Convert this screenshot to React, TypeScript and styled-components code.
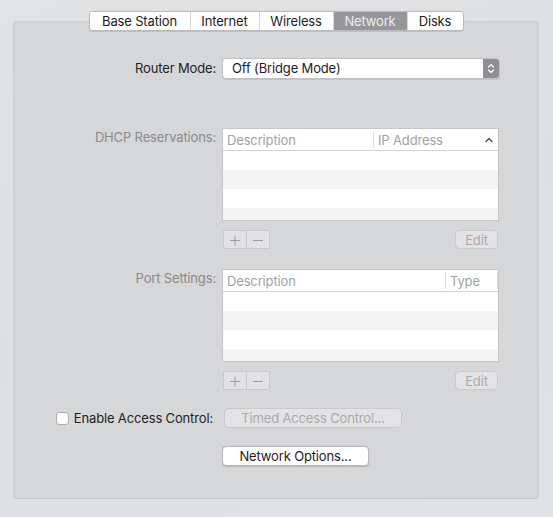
import React from "react";
import styled, { createGlobalStyle } from "styled-components";

const Global = createGlobalStyle`
  html, body { margin: 0; padding: 0; }
  body {
    width: 553px;
    height: 517px;
    overflow: hidden;
    font-family: Inter, Roboto, "Liberation Sans", Arial, sans-serif;
    font-size: 13px;
    letter-spacing: -0.15px;
    color: #222;
    background: linear-gradient(160deg, #e2e3e5 0%, #dedfe1 50%, #e1e2e4 100%);
  }
`;

const Page = styled.div`
  box-sizing: border-box;
  width: 553px;
  height: 517px;
  padding: 11px 14px 0 13px;
  display: flex;
  flex-direction: column;
`;

const TabBar = styled.div`
  align-self: center;
  display: flex;
  height: 20px;
  box-sizing: border-box;
  border: 1px solid #b9b9bb;
  border-radius: 4px;
  background: #fff;
  overflow: hidden;
  position: relative;
  z-index: 1;
  box-shadow: 0 0.5px 1px rgba(0, 0, 0, 0.12);
`;

const Tab = styled.div<{ $active?: boolean; $w: number }>`
  width: ${(p) => p.$w}px;
  box-sizing: border-box;
  display: flex;
  align-items: center;
  justify-content: center;
  font-size: 13px;
  color: ${(p) => (p.$active ? "#ececee" : "#1d1d1d")};
  background: ${(p) => (p.$active ? "#97979b" : "#fff")};
  border-left: 1px solid #d6d6d8;
  &:first-child { border-left: none; }
`;

const Panel = styled.div`
  margin-top: -10px;
  box-sizing: border-box;
  height: 478px;
  border: 1px solid #cbccce;
  border-bottom-color: #c4c5c7;
  border-radius: 4px;
  background: #d6d7d9;
  padding-top: 36px;
  display: flex;
  flex-direction: column;
`;

const Row = styled.div<{ $mt?: number }>`
  display: flex;
  align-items: flex-start;
  margin-top: ${(p) => p.$mt ?? 0}px;
`;

const Label = styled.div<{ $disabled?: boolean; $h?: number }>`
  width: 202px;
  margin-right: 6px;
  text-align: right;
  line-height: ${(p) => p.$h ?? 21}px;
  color: ${(p) => (p.$disabled ? "#8a8a8c" : "#1f1f1f")};
  white-space: nowrap;
`;

const Control = styled.div`
  width: 277px;
`;

const Select = styled.div`
  box-sizing: border-box;
  width: 278px;
  height: 21px;
  border: 1px solid #c2c2c4;
  border-radius: 4px;
  background: #fff;
  display: flex;
  align-items: stretch;
  overflow: hidden;
  box-shadow: 0 0.5px 1px rgba(0, 0, 0, 0.1);
`;

const SelectText = styled.div`
  flex: 1;
  padding-left: 9px;
  line-height: 19px;
  color: #1d1d1d;
`;

const Stepper = styled.div`
  width: 16px;
  background: #8f8f93;
  display: flex;
  align-items: center;
  justify-content: center;
`;

const Table = styled.div`
  box-sizing: border-box;
  width: 277px;
  height: 93px;
  border: 1px solid #c6c6c8;
  background: #fff;
  display: flex;
  flex-direction: column;
  overflow: hidden;
`;

const Header = styled.div`
  height: 21px;
  border-bottom: 1px solid #d3d3d5;
  display: flex;
  align-items: stretch;
  color: #a2a2a4;
  flex-shrink: 0;
`;

const HeaderCell = styled.div<{ $w?: number; $sep?: boolean }>`
  ${(p) => (p.$w ? `width: ${p.$w}px;` : "flex: 1;")}
  box-sizing: border-box;
  padding-left: 4px;
  padding-top: 1px;
  display: flex;
  justify-content: space-between;
  align-items: center;
  ${(p) => (p.$sep ? "border-left: 1px solid #dcdcde; margin: 2px 0 2px 0;" : "")}
`;

const Caret = styled.span`
  padding-right: 5px;
  display: flex;
  align-items: center;
`;

const EndSep = styled.span`
  align-self: stretch;
  border-right: 1px solid #dcdcde;
  margin-top: -1px;
`;

const RowStripe = styled.div<{ $odd?: boolean }>`
  height: 19px;
  flex-shrink: 0;
  background: ${(p) => (p.$odd ? "#f4f4f5" : "#fff")};
`;

const ButtonsRow = styled.div`
  display: flex;
  justify-content: space-between;
  align-items: center;
  width: 277px;
  padding-left: 1px;
  box-sizing: border-box;
`;

const Segmented = styled.div`
  display: flex;
  height: 19px;
  border: 1px solid #c9c9cb;
  box-sizing: border-box;
  background: #e2e2e4;
`;

const SegButton = styled.div`
  width: 22px;
  display: flex;
  align-items: center;
  justify-content: center;
  & + & { border-left: 1px solid #c9c9cb; }
`;

const Button = styled.div<{ $disabled?: boolean; $w: number }>`
  box-sizing: border-box;
  width: ${(p) => p.$w}px;
  height: 20px;
  border: 1px solid ${(p) => (p.$disabled ? "#cacacc" : "#b7b7b9")};
  border-radius: 4px;
  background: ${(p) => (p.$disabled ? "#e3e3e5" : "#fff")};
  color: ${(p) => (p.$disabled ? "#a9a9ab" : "#1d1d1d")};
  display: flex;
  align-items: center;
  justify-content: center;
  box-shadow: ${(p) => (p.$disabled ? "none" : "0 0.5px 1px rgba(0,0,0,0.15)")};
`;

const SmallButton = styled(Button)`
  height: 19px;
  margin-right: 1px;
`;

const CheckRow = styled.div`
  display: flex;
  align-items: center;
  margin-top: 18px;
`;

const CheckLabel = styled.label`
  width: 202px;
  margin-right: 8px;
  display: flex;
  justify-content: flex-end;
  align-items: center;
  gap: 5px;
  color: #1f1f1f;
  white-space: nowrap;
  padding-right: 3px;
  box-sizing: border-box;
`;

const Box = styled.span`
  width: 13px;
  height: 13px;
  box-sizing: border-box;
  border: 1px solid #ababad;
  border-radius: 3px;
  background: #fff;
  display: inline-block;
`;

const Glyph = ({ minus }: { minus?: boolean }) => (
  <svg width="12" height="12" viewBox="0 0 12 12">
    <path d={minus ? "M1 6.5h10" : "M1 6.5h10M6 1.5v10"} stroke="#9c9c9e" strokeWidth="1" fill="none" />
  </svg>
);

const Arrows = () => (
  <svg width="8" height="13" viewBox="0 0 8 13">
    <path d="M1.5 5L4 2.5L6.5 5M1.5 8L4 10.5L6.5 8" stroke="#fff" strokeWidth="1.2" fill="none" strokeLinecap="round" strokeLinejoin="round" />
  </svg>
);

const SortUp = () => (
  <svg width="8" height="6" viewBox="0 0 8 6">
    <path d="M1 4.5L4 1.5L7 4.5" stroke="#4a4a4c" strokeWidth="1.3" fill="none" strokeLinecap="round" strokeLinejoin="round" />
  </svg>
);

const DataTable = ({ second, caret, w }: { second: string; caret?: boolean; w: number }) => (
  <Table>
    <Header>
      <HeaderCell>Description</HeaderCell>
      <HeaderCell $w={w} $sep>
        {second}
        {caret ? <Caret><SortUp /></Caret> : <EndSep />}
      </HeaderCell>
    </Header>
    <RowStripe />
    <RowStripe $odd />
    <RowStripe />
    <RowStripe $odd />
  </Table>
);

const Actions = () => (
  <ButtonsRow>
    <Segmented>
      <SegButton><Glyph /></SegButton>
      <SegButton><Glyph minus /></SegButton>
    </Segmented>
    <SmallButton $disabled $w={43}>Edit</SmallButton>
  </ButtonsRow>
);

export default function App() {
  const tabs = [
    { name: "Base Station", w: 100 },
    { name: "Internet", w: 69 },
    { name: "Wireless", w: 74 },
    { name: "Network", w: 74, active: true },
    { name: "Disks", w: 56 },
  ];
  return (
    <>
      <Global />
      <Page>
        <TabBar>
          {tabs.map((t) => (
            <Tab key={t.name} $w={t.w} $active={t.active}>{t.name}</Tab>
          ))}
        </TabBar>
        <Panel>
          <Row>
            <Label>Router Mode:</Label>
            <Select>
              <SelectText>Off (Bridge Mode)</SelectText>
              <Stepper><Arrows /></Stepper>
            </Select>
          </Row>
          <Row $mt={49}>
            <Label $disabled $h={19}>DHCP Reservations:</Label>
            <Control><DataTable second="IP Address" caret w={125} /></Control>
          </Row>
          <Row $mt={9}>
            <Label />
            <Actions />
          </Row>
          <Row $mt={20}>
            <Label $disabled $h={19}>Port Settings:</Label>
            <Control><DataTable second="Type" w={53} /></Control>
          </Row>
          <Row $mt={9}>
            <Label />
            <Actions />
          </Row>
          <CheckRow>
            <CheckLabel><Box />Enable Access Control:</CheckLabel>
            <Button $disabled $w={178}>Timed Access Control...</Button>
          </CheckRow>
          <Row $mt={18}>
            <Label />
            <Button $w={147}>Network Options...</Button>
          </Row>
        </Panel>
      </Page>
    </>
  );
}
